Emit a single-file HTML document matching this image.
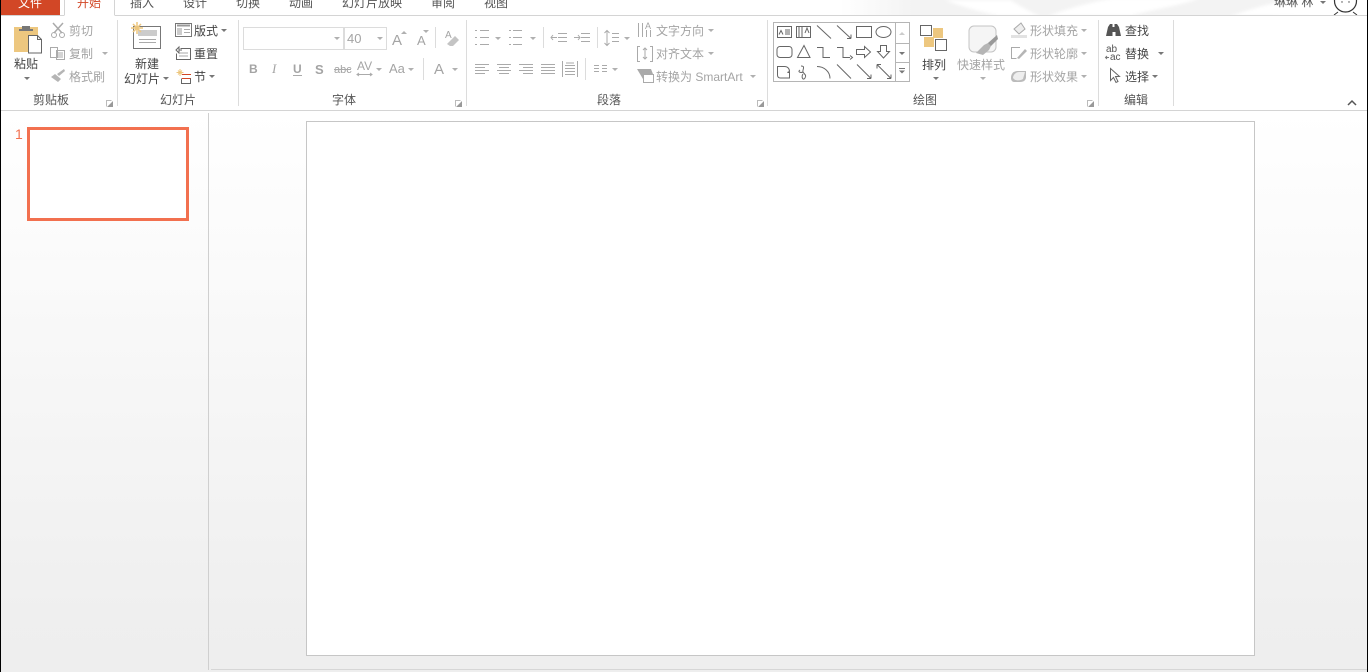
<!DOCTYPE html>
<html lang="zh"><head><meta charset="utf-8"><title>PowerPoint</title>
<style>
html,body{margin:0;padding:0;width:1368px;height:672px;overflow:hidden;background:#fff}
#bg{position:absolute;left:0;top:112px;width:1368px;height:560px;background:linear-gradient(#fff 0,#fcfcfc 100px,#efefef 500px,#eeeeee 560px)}
svg{position:absolute;left:0;top:0}
text{font-family:"Liberation Sans","Noto Sans CJK SC",sans-serif;font-size:12px;fill:#444}
.d{fill:#a4a4a4}
.l{fill:#555}
.m{text-anchor:middle}
.g{fill:none;stroke:#666;stroke-width:1}
.h{fill:none;stroke:#aaa;stroke-width:1}
.s{stroke:#dcdcdc;stroke-width:1}
.a{fill:#777}
.b{fill:#b0b0b0}
</style></head><body>
<div id="bg"></div>
<svg width="1368" height="672" viewBox="0 0 1368 672" shape-rendering="geometricPrecision">
<defs><filter id="bl"><feGaussianBlur stdDeviation="1.5"/></filter>
<linearGradient id="fd" x1="0" x2="1" y1="0" y2="0"><stop offset="0" stop-color="#f4f4f4" stop-opacity="0"/><stop offset=".15" stop-color="#f3f3f3"/><stop offset=".9" stop-color="#f3f3f3"/><stop offset="1" stop-color="#f3f3f3" stop-opacity="0"/></linearGradient>
<clipPath id="tc"><rect x="0" y="0" width="1368" height="15"/></clipPath></defs>

<!-- title decoration -->
<g clip-path="url(#tc)">
<rect x="840" y="0" width="480" height="15" fill="url(#fd)"/>
<g filter="url(#bl)" fill="#fff">
<path d="M945 0H1010C1020 6 1030 12 1040 16H1000C980 12 960 6 945 0Z"/>
<path d="M1048 16C1070 8 1090 2 1115 -2H1200C1180 6 1150 10 1130 16Z"/>
<path d="M1230 16C1250 10 1262 5 1290 0H1334V16Z"/>
</g></g>

<!-- tabs -->
<rect x="1" y="0" width="59" height="15" fill="#d24726"/>
<text class="m" x="30" y="7" style="fill:#fff">文件</text>
<path d="M64.500 0V15.500M114.500 0V15.500" stroke="#d4d4d4" fill="none"/>
<path d="M0 15.500H64M115 15.500H1368" stroke="#d4d4d4"/>
<text class="m" x="89" y="7" style="fill:#d24726">开始</text>
<text class="m l" x="142" y="7">插入</text>
<text class="m l" x="195" y="7">设计</text>
<text class="m l" x="248" y="7">切换</text>
<text class="m l" x="301" y="7">动画</text>
<text class="m l" x="372" y="7">幻灯片放映</text>
<text class="m l" x="443" y="7">审阅</text>
<text class="m l" x="496" y="7">视图</text>

<!-- account -->
<text x="1274" y="6" class="l">琳琳 林</text>
<path class="a" d="M1320 1h6l-3 3z"/>
<g clip-path="url(#tc)"><rect x="1334" y="0" width="24" height="15" fill="#fff"/>
<circle cx="1345.500" cy="1" r="11" fill="#fff" stroke="#333" stroke-width="1.200"/>
<path d="M1334 15l4-3M1357 15l-4-3" stroke="#333"/>
<circle cx="1342" cy="2" r=".7" fill="#444"/><circle cx="1349" cy="2" r=".7" fill="#444"/></g>

<!-- separators -->
<path class="s" d="M117.500 20V106M238.500 20V106M466.500 20V106M767.500 20V106M1098.500 20V106M1173.500 20V106"/>
<path d="M0 110.500H1368" stroke="#d4d4d4"/>
<!-- group labels -->
<text class="m l" x="51" y="104">剪贴板</text>
<text class="m l" x="178" y="104">幻灯片</text>
<text class="m l" x="344" y="104">字体</text>
<text class="m l" x="609" y="104">段落</text>
<text class="m l" x="925" y="104">绘图</text>
<text class="m l" x="1136" y="104">编辑</text>
<g fill="none" stroke="#bbb"><path d="M106.500 106.500v-6h5M455.500 106.500v-6h5M757.500 106.500v-6h5M1087.500 106.500v-6h5"/></g>
<path fill="#999" d="M113 100v6h-6zM462 100v6h-6zM764 100v6h-6zM1094 100v6h-6z" transform="translate(0,1)"/>
<path d="M1348 105l4-4 4 4" fill="none" stroke="#555" stroke-width="1.500"/>

<!-- clipboard -->
<rect x="14" y="27" width="24" height="25" fill="#edc77f"/>
<path d="M19 31h14v-2h-3v-3h-8v3h-3z" fill="#777"/>
<path d="M28.500 35.500h9l4 4v13.500h-13z" fill="#fff" stroke="#666"/>
<path d="M37.500 35.500v4h4" class="g"/>
<text class="m" x="26" y="68">粘贴</text>
<path class="a" d="M24 77h6l-3 3z"/>
<!-- cut/copy/brush -->
<path d="M53 23l9 10M63 23l-9 10" fill="none" stroke="#aaa" stroke-width="1.500"/><circle class="h" cx="54" cy="35" r="2.500"/><circle class="h" cx="62" cy="35" r="2.500"/>
<text class="d" x="69" y="35">剪切</text>
<path class="h" d="M50.500 47.500h7v10h-7zM56.500 50.500h8v9h-8zM58 53h5M58 55h5M58 57h5"/>
<text class="d" x="69" y="58">复制</text>
<path class="b" d="M102 52h6l-3 3z"/>
<path d="M51 77l4-3 6 5-3 3zM57 74l7-5 1 2-6 5z" fill="#b5b5b5"/>
<text class="d" x="69" y="81">格式刷</text>

<!-- new slide -->
<rect x="133.500" y="26.500" width="27" height="22" fill="#fff" stroke="#777"/>
<rect x="138" y="30" width="19" height="6" fill="#ccc"/>
<path d="M139 39.500h17M139 42.500h17" stroke="#aaa"/>
<path d="M137 22v12M131 28h12M133 24l8 8M141 24l-8 8" stroke="#edc77f" stroke-width="1.500"/>
<text class="m" x="147" y="68">新建</text>
<text x="124" y="83">幻灯片</text>
<path class="a" d="M163 77h6l-3 3z"/>
<rect x="175.500" y="23.500" width="16" height="13" fill="#fff" stroke="#777"/>
<path d="M177 25.500h13" stroke="#999" stroke-width="2"/><rect x="177" y="28" width="5" height="7" fill="#ccc"/><path d="M184 29.500h6M184 32.500h6" stroke="#aaa"/>
<text x="194" y="35">版式</text>
<path class="a" d="M221 29h6l-3 3z"/>
<path class="g" d="M180.500 48.500h10v11h-14v-6M176 50l3-3v6zM179 50h3"/><path d="M179 53h9M179 56h9" stroke="#aaa"/>
<text x="194" y="58">重置</text>
<path d="M180 69v7M176.500 72.500h7M178 70.500l4 4M182 70.500l-4 4" stroke="#edc77f"/>
<path d="M182 74.500h9M182 78.500h9" stroke="#d24726"/><path class="g" d="M181.500 78.500v5h9v-5"/>
<text x="194" y="81">节</text>
<path class="a" d="M209 75h6l-3 3z"/>

<!-- font -->
<rect x="243.500" y="27.500" width="100" height="22" fill="#fff" stroke="#dcdcdc"/>
<rect x="344.500" y="27.500" width="42" height="22" fill="#fff" stroke="#dcdcdc"/>
<path class="b" d="M334 37h6l-3 3zM377 37h6l-3 3z"/>
<text x="347" y="43" class="d" style="font-size:13px">40</text>
<text x="392" y="45" class="d" style="font-size:15px">A</text>
<path class="b" d="M401 34l3-3 3 3z"/>
<text x="417" y="45" class="d" style="font-size:13px">A</text>
<path class="b" d="M423 30h6l-3 3z"/>
<path class="s" d="M435.500 27V48"/>
<text x="445" y="38" class="d" style="font-size:10px">A</text>
<path d="M447 44l8-8 4 4-6 6h-3z" fill="#c4c4c4"/>
<text x="249" y="73" class="d" style="font-weight:bold">B</text>
<text x="272" y="73" class="d" style="font-style:italic;font-family:'Liberation Serif',serif;font-size:13px">I</text>
<text x="293" y="73" class="d" style="font-weight:bold">U</text>
<text x="315" y="74" class="d" style="font-weight:bold;font-size:13px">S</text>
<path d="M293 75.500h9" stroke="#aaa"/>
<text x="334" y="73" class="d" style="font-size:11px">abc</text>
<path d="M334 69.500h17" stroke="#aaa"/>
<text x="357" y="70" class="d">AV</text>
<path class="h" d="M357 74.500h15M359 73l-2 1.500 2 1.500M370 73l2 1.500-2 1.500"/>
<path class="b" d="M376 68h6l-3 3zM408 68h6l-3 3zM452 68h6l-3 3z"/>
<text x="389" y="73" class="d" style="font-size:13px">Aa</text>
<path class="s" d="M423.500 58V80"/>
<text x="434" y="74" class="d" style="font-size:15px">A</text>

<!-- paragraph -->
<g class="h">
<path d="M480 30.500h9M480 37.500h9M480 44.500h9M475 30.500h2M475 37.500h2M475 44.500h2"/>
<path d="M513 30.500h9M513 37.500h9M513 44.500h9M509 30.500h2M509 37.500h2M509 44.500h2"/>
<path d="M551 37.500h6M553 35l-2 2.500 2 2.500M558 33.500h9M558 37.500h9M558 41.500h9"/>
<path d="M574 37.500h6M578 35l2 2.500-2 2.500M581 33.500h9M581 37.500h9M581 41.500h9"/>
<path d="M607 31v14M604.500 33l2.500-2.500 2.500 2.500M604.500 43l2.500 2.500 2.500-2.500M612 33.500h7M612 37.500h7M612 41.500h7"/>
<path d="M475 64.500h14M475 67.500h10M475 70.500h14M475 73.500h10"/>
<path d="M497 64.500h14M499 67.500h10M497 70.500h14M499 73.500h10"/>
<path d="M519 64.500h14M523 67.500h10M519 70.500h14M523 73.500h10"/>
<path d="M541 64.500h14M541 67.500h14M541 70.500h14M541 73.500h14"/>
<path d="M562.500 61v16M577.500 61v16M565 65.500h10M565 68.500h10M565 71.500h10M565 74.500h10M566 63h8"/>
<path d="M594 65.500h5M594 68.500h5M594 71.500h5M602 65.500h5M602 68.500h5M602 71.500h5"/>
</g>
<path class="b" d="M495 37h6l-3 3zM530 37h6l-3 3zM624 37h6l-3 3zM612 68h6l-3 3zM708 29h6l-3 3zM708 52h6l-3 3zM750 75h6l-3 3z"/>
<path class="s" d="M543.500 27V48M597.500 27V48M585.500 58V80"/>
<path class="h" d="M638.500 23v14M642.500 23v14M646.500 30v7M650.500 30v7"/>
<text x="645" y="29" class="d" style="font-size:9px">A</text>
<text class="d" x="656" y="35">文字方向</text>
<path class="h" d="M640 46.500h-2.500v15h2.500M650 46.500h2.500v15h-2.500M645 48v11M643 50l2-2 2 2M643 57l2 2 2-2"/>
<text class="d" x="656" y="58">对齐文本</text>
<path d="M637 69h14l2 5h-10v5z" fill="#aaa"/><rect x="643.500" y="74.500" width="10" height="8" fill="#fff" stroke="#aaa"/>
<text class="d" x="656" y="81">转换为 SmartArt</text>

<!-- shapes -->
<rect x="773.500" y="22.500" width="136" height="59" fill="#fff" stroke="#b5b5b5"/>
<path d="M895.500 22.500V81.500M895.500 43.500H909.500M895.500 62.500H909.500" stroke="#b5b5b5" fill="none"/>
<path d="M899 35l3-3 3 3z" fill="#ccc"/><path class="a" d="M899 52h6l-3 3z"/><path class="a" d="M899 70.500h6l-3 3z"/><path d="M899 68.500h6" stroke="#777"/>
<g class="g">
<rect x="777.500" y="26.500" width="14" height="11"/><path d="M785 30h5M785 32h5M785 34h5M779 34.500l2-4 2 4"/>
<rect x="796.500" y="26.500" width="14" height="11"/><path d="M799 27v10M802 27v10M805 33l2-5 2 5"/>
<path d="M817 25.500l14 13M837 25.500l14 13M851 38.500v-4M851 38.500h-4"/>
<rect x="856.500" y="26.500" width="15" height="11"/>
<ellipse cx="883.500" cy="32" rx="7.500" ry="5.500"/>
<rect x="777" y="46.500" width="15" height="11" rx="3"/>
<path d="M804 45.500l6 12h-12.500z"/>
<path d="M817 47.500h6v10h7M837 47.500h6v10h7M850 55.500l2.500 2-2.500 2"/>
<path d="M856.500 49.500h8v-3l6 5.500-6 5.500v-3h-8z"/>
<path d="M880.500 45.500h6v6h3l-6 6.500-6-6.500h3z"/>
<path d="M777.500 66.500h7c3 0 5 2 5 5l-2 1h2v5.500h-9c-2 0-3-1-3-3z"/>
<path d="M801 66c5 0 1 4 2 6s4 3 2 6-4-1-2-4M800 70c-3 2 1 3 3 2"/>
<path d="M817 66.500c7 0 13 5 13 12"/>
<path d="M837 64.500l14 14M857 64.500l14 14M871 78.500v-4M871 78.500h-4M877 64.500l14 14M877 64.500v4M877 64.500h4M891 78.500v-4M891 78.500h-4"/>
</g>
<!-- arrange -->
<rect x="933" y="28" width="10" height="10" fill="#edc77f"/><rect x="924" y="37" width="10" height="10" fill="#edc77f"/>
<rect x="920.500" y="25.500" width="11" height="10" fill="#fff" stroke="#666"/>
<rect x="935.500" y="39.500" width="11" height="11" fill="#fff" stroke="#666"/>
<text class="m" x="934" y="69">排列</text>
<path class="a" d="M933 77h6l-3 3z"/>
<!-- quick styles -->
<rect x="969" y="26" width="27" height="26" rx="5" fill="#f5f5f5" stroke="#c4c4c4"/>
<path d="M976 53l8-8 6-3 2 2-3 6-6 5z" fill="#b5b5b5"/><path d="M988 43l9-8 1 4-7 7z" fill="#999"/>
<text class="m d" x="981" y="69">快速样式</text>
<path class="b" d="M980 77h6l-3 3z"/>
<!-- shape fill/outline/effect -->
<path d="M1014 29l7-6 4 6-6 5z" fill="#eee" stroke="#aaa"/><rect x="1011" y="35" width="16" height="3" fill="#e2e2e2"/>
<text class="d" x="1030" y="35">形状填充</text>
<path class="h" d="M1020 47.500h-8.500v11h5"/><path d="M1017 58l8-9 2 2-8 8z" fill="#b5b5b5"/>
<text class="d" x="1030" y="58">形状轮廓</text>
<path d="M1011 78c0-5 3-7 7-7h8v6c0 3-2 5-6 5h-6c-2 0-3-2-3-4z" fill="#bbb"/><path d="M1013 78c0-3 3-6 6-6h6l-2 7c-3 2-8 2-10-1z" fill="#eee"/>
<text class="d" x="1030" y="81">形状效果</text>
<path class="b" d="M1081 29h6l-3 3zM1081 52h6l-3 3zM1081 75h6l-3 3z"/>

<!-- editing -->
<path d="M1106 36l2-9 2-3h2.500v3h2v-3h2.500l2 3 2 9h-5.500v-4h-3v4z" fill="#555"/>
<text x="1125" y="35">查找</text>
<text x="1106" y="52" class="l" style="font-size:10px">ab</text>
<text x="1110" y="60" class="l" style="font-size:10px">ac</text>
<path d="M1106 57.500h3M1107 56l-1.500 1.500 1.500 1.500" stroke="#777" fill="none"/>
<text x="1125" y="58">替换</text>
<path class="a" d="M1158 52h6l-3 3z"/>
<path class="g" d="M1110.500 68.500v12l3-3 2.500 5 2-1-2.500-5h4z"/>
<text x="1125" y="81">选择</text>
<path class="a" d="M1152 75h6l-3 3z"/>

<!-- panes -->
<text x="15" y="139" style="fill:#f2704f;font-size:14px">1</text>
<rect x="28.500" y="128.500" width="159" height="91" fill="#fff" stroke="#f2704f" stroke-width="3"/>
<path d="M208.500 113V670" stroke="#cfcfcf"/>
<rect x="306.500" y="121.500" width="948" height="534" fill="#fff" stroke="#c6c6c6"/>
<path d="M211 669.500H1367" stroke="#d6d6d6"/>
<rect x="0" y="0" width="1" height="672" fill="#000"/>
<rect x="1367" y="0" width="1" height="672" fill="#000"/>
</svg>
</body></html>
